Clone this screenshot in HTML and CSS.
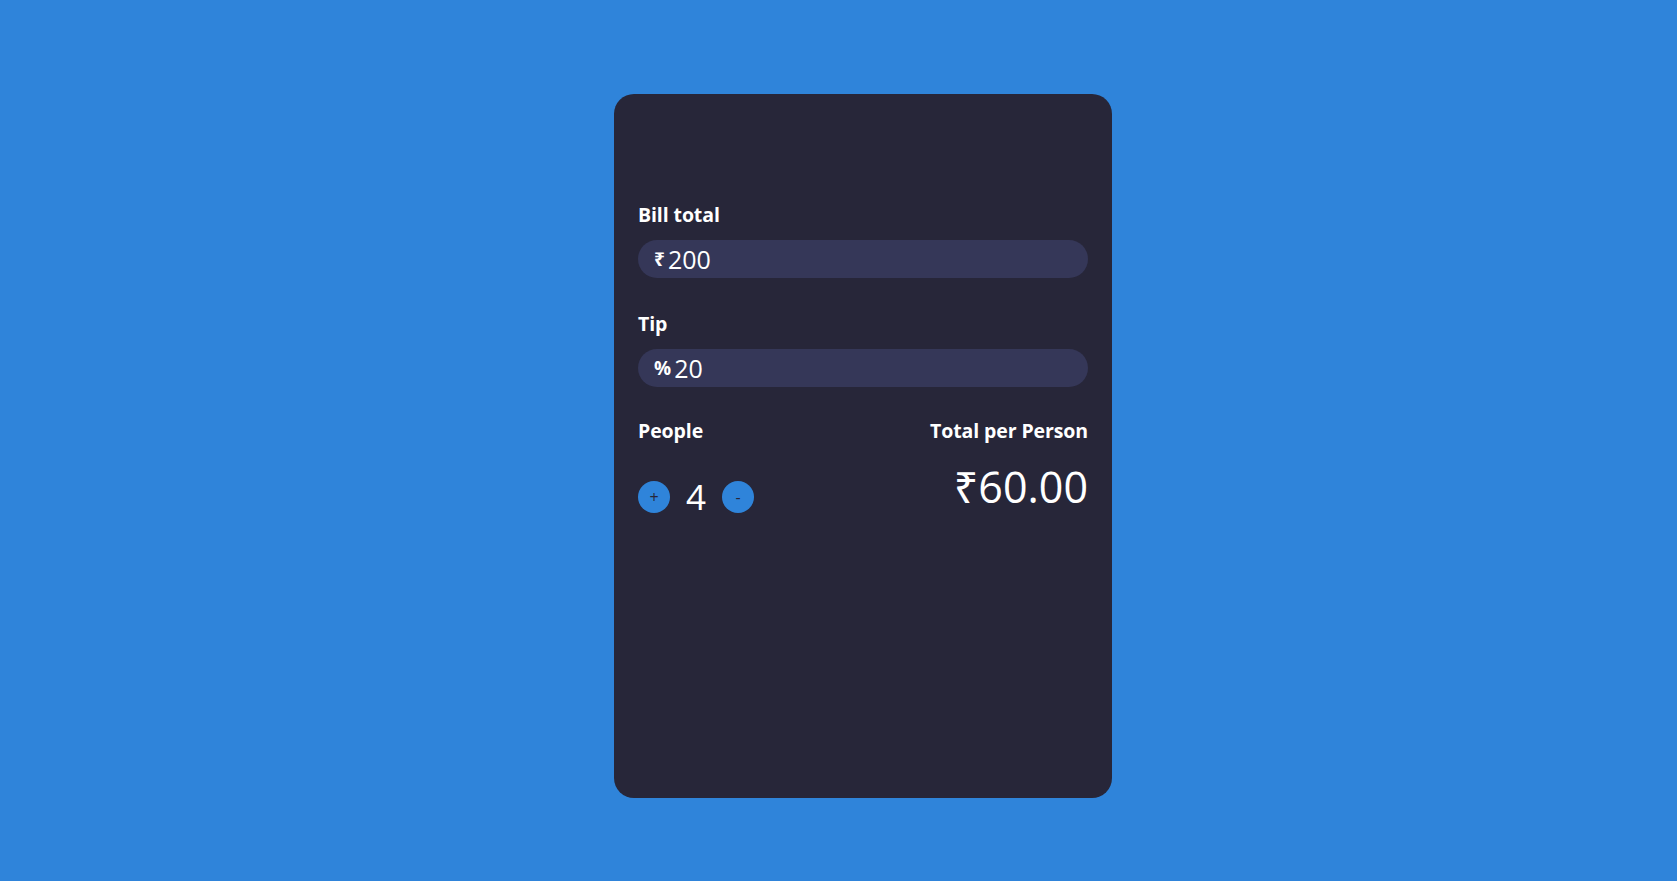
FILE: index.html
```html
<!DOCTYPE html>
<html>
<head>
<meta charset="utf-8">
<link rel="stylesheet" href="styles.css">
</head>
<body>
<main class="card">
  <div class="field">
    <label class="label">Bill total</label>
    <div class="input"><span class="unit unit-rupee">₹</span><span class="value">200</span></div>
  </div>
  <div class="field field-last">
    <label class="label">Tip</label>
    <div class="input"><span class="unit unit-pct">%</span><span class="value">20</span></div>
  </div>
  <div class="bottom">
    <div class="people">
      <div class="label">People</div>
      <div class="counter">
        <button class="btn">+</button>
        <span class="count">4</span>
        <button class="btn">-</button>
      </div>
    </div>
    <div class="total">
      <div class="label">Total per Person</div>
      <div class="amount">₹60.00</div>
    </div>
  </div>
</main>
</body>
</html>
```
FILE: styles.css
```css
html, body {
  margin: 0;
  height: 100%;
}
body {
  background: #2f84da;
  font-family: "Open Sans", "Noto Sans", sans-serif;
  color: #ffffff;
  padding: 94px 0 0 614px;
  box-sizing: border-box;
}
.card {
  width: 498px;
  height: 704px;
  box-sizing: border-box;
  background: #272639;
  border-radius: 20px;
  padding: 108px 24px 0 24px;
  display: flex;
  flex-direction: column;
}
.label {
  display: block;
  font-size: 19.5px;
  font-weight: 700;
  line-height: 26px;
  letter-spacing: -0.1px;
}
.field {
  display: flex;
  flex-direction: column;
  gap: 12px;
  margin-bottom: 33px;
}
.field-last {
  margin-bottom: 31px;
}
.input {
  height: 38px;
  border-radius: 19px;
  background: #353758;
  display: flex;
  align-items: center;
  padding-left: 16px;
  gap: 3px;
}
.unit {
  font-size: 19px;
  font-weight: 700;
}
.value {
  font-size: 25px;
}
.bottom {
  display: flex;
  justify-content: space-between;
}
.people {
  display: flex;
  flex-direction: column;
  gap: 33px;
}
.counter {
  display: flex;
  align-items: center;
  gap: 16px;
}
.btn {
  width: 32px;
  height: 32px;
  border-radius: 50%;
  border: none;
  background: #2f84da;
  color: #272639;
  font-family: "Open Sans", sans-serif;
  font-size: 16px;
  padding: 0;
  display: flex;
  align-items: center;
  justify-content: center;
}
.count {
  font-size: 35px;
  line-height: 40px;
}
.total {
  display: flex;
  flex-direction: column;
  align-items: flex-end;
  gap: 18px;
}
.amount {
  font-size: 43px;
  line-height: 50px;
}
```
